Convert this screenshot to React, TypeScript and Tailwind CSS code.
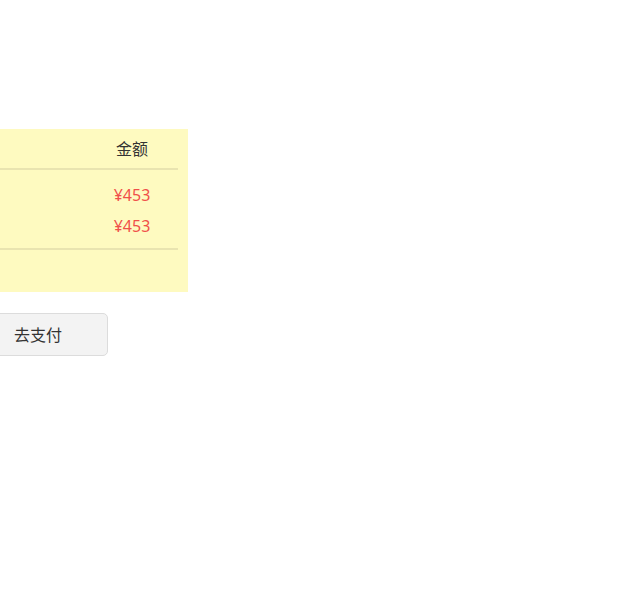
export default function App() {
  const font = { fontFamily: '"Noto Sans", "Noto Sans CJK SC", sans-serif' };
  return (
    <div className="w-[617px] h-[614px] bg-white overflow-hidden" style={font}>
      <div className="pt-[129px]">
        <div className="w-[188px] bg-[#fefac0] pr-[10px]">
          <div className="flex h-[41px] items-center justify-end border-b-2 border-[#e9e4b0]">
            <div className="w-[68px] text-center text-[16px] text-[#333] pt-[1px]">金额</div>
            <div className="w-[12px]" />
          </div>
          <div className="pt-[9px] pb-[7px] border-b-2 border-[#e9e4b0]">
            {[0, 1].map((i) => (
              <div key={i} className="flex h-[31px] items-center justify-end">
                <div className="w-[68px] text-center text-[16px] text-[#f0504a]">¥453</div>
                <div className="w-[12px]" />
              </div>
            ))}
          </div>
          <div className="h-[42px]" />
        </div>
        <div className="mt-[21px] ml-[-10px] w-[118px] h-[43px] rounded-[5px] border border-[#dcdcdc] bg-[#f3f3f3] flex items-center">
          <span className="ml-[23px] text-[16px] text-[#333]">去支付</span>
        </div>
      </div>
    </div>
  );
}
